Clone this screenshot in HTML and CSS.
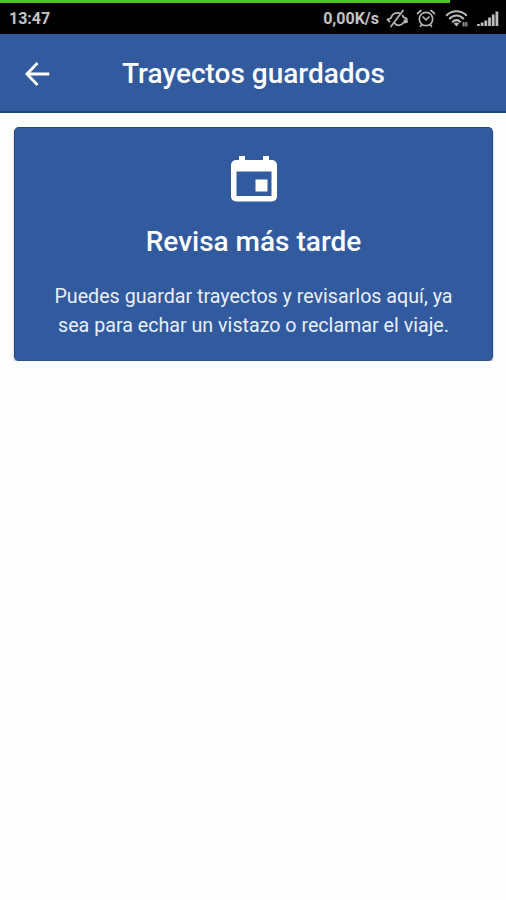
FILE: index.html
```html
<!DOCTYPE html>
<html lang="es">
<head>
<meta charset="utf-8">
<title>Trayectos guardados</title>
<link rel="stylesheet" href="styles.css">
</head>
<body>
<div class="status">
  <div class="progress"></div>
  <span class="clock">13:47</span>
  <span class="speed">0,00K/s</span>
  <svg class="mute" width="23" height="20" viewBox="0 0 23 20" fill="none" stroke="#b5b5b5" stroke-width="1.800" stroke-linecap="round" stroke-linejoin="round">
    <path d="M1.500 10.500l3.500-1.500c1-3.500 3.500-5.500 8-5M1.500 10.500l2 2M17 1.500L5 17.500M16.500 6.500c.5 1.500 1.500 2.500 4 3l.5 3.500-3.500.5c-1 1.500-2 2.500-4 2.700M9 14.500c1 1.500 2.500 2 4.500 1.700M18.500 11.500h1.500"/>
  </svg>
  <svg class="alarm" width="20" height="20" viewBox="0 0 20 20" fill="none" stroke="#b5b5b5" stroke-width="1.700" stroke-linecap="round">
    <circle cx="10" cy="10" r="6.700"/>
    <path d="M1.500 4.500L5 1.500M18.500 4.500L15 1.500M7 8l3 2.800L13 8M5.500 15.800l-1 1.500M14.500 15.800l1 1.500"/>
  </svg>
  <svg class="wifi" width="24" height="18" viewBox="0 0 24 18" fill="none" stroke="#bdbdbd" stroke-width="2.100">
    <path d="M1.200 5.700C7-.3 16-.3 21.800 5.700M4.200 9c4.200-4.600 10.400-4.600 14.600 0M7.300 12.200c2.600-2.600 5.800-2.600 8.400 0"/>
    <path d="M8.800 13.500L11.500 16.500l2.700-3c-1.600-1.500-3.800-1.500-5.400 0z" fill="#bdbdbd" stroke="none"/>
    <path d="M18.600 12v4.500M21.400 12v4.500" stroke="#888"/>
  </svg>
  <svg class="signal" width="22" height="16" viewBox="0 0 22 16" fill="#bdbdbd">
    <path d="M0 13h2.800v2H0zM3.700 11.500h2.800V15H3.700zM7.400 9.500h2.800V15H7.400zM11.100 6.500h2.800V15h-2.800zM14.800 3.500h2.800V15h-2.800zM18.500.5h2.800V15h-2.800z"/>
  </svg>
</div>
<header class="appbar">
  <svg class="back" width="25" height="24" viewBox="0 0 25 24" fill="none" stroke="#fff" stroke-width="2.800">
    <path d="M24.300 12H2.500M12.500 1L1.900 12l10.600 11"/>
  </svg>
  <h1>Trayectos guardados</h1>
</header>
<main class="card">
  <svg class="event" width="46" height="46" viewBox="0 0 46 46">
    <path fill="#fff" fill-rule="evenodd" d="M8 0h6v4h18V0h6v4h3a5 5 0 0 1 5 5v31.500a5 5 0 0 1-5 5H5a5 5 0 0 1-5-5V9a5 5 0 0 1 5-5h3zM5.500 15.500V40h35V15.500zM24.500 23.500H36.500V35.500H24.500z"/>
  </svg>
  <h2>Revisa más tarde</h2>
  <p>Puedes guardar trayectos y revisarlos aquí, ya<br>sea para echar un vistazo o reclamar el viaje.</p>
</main>
</body>
</html>
```
FILE: styles.css
```css
* {
  box-sizing: border-box;
}

body {
  margin: 0;
  background: #fefefe;
  color: #fff;
  font-family: Roboto, "Liberation Sans", sans-serif;
}

svg {
  display: block;
  flex: none;
}

.status {
  position: relative;
  display: flex;
  align-items: center;
  height: 34px;
  padding: 3px 7px 0 9px;
  background: #000;
  color: #c4c4c4;
  font-size: 16px;
  font-weight: 700;
}

.progress {
  position: absolute;
  top: 0;
  left: 0;
  width: 450px;
  height: 3px;
  background: #50c522;
}

.speed {
  margin-left: auto;
}

.mute {
  margin-left: 7px;
}

.alarm {
  margin-left: 7px;
}

.wifi {
  margin-left: 9px;
}

.signal {
  margin-left: 8px;
}

.appbar {
  display: flex;
  align-items: center;
  height: 79px;
  padding: 2px 0 0 25px;
  background: #325a9e;
  border-bottom: 2px solid #174684;
}

h1,
h2,
p {
  margin: 0;
  white-space: nowrap;
}

h1 {
  margin-left: 72px;
  font-size: 28px;
  font-weight: 500;
}

.card {
  display: flex;
  flex-direction: column;
  align-items: center;
  height: 234px;
  margin: 14px 13px 0 14px;
  padding-top: 28px;
  background: #325a9e;
  border: 1px solid #1d4b8d;
  border-bottom-color: #2a5297;
  border-radius: 5px;
  box-shadow: 0 2px 2px rgba(0, 0, 0, 0.35);
}

h2 {
  margin-top: 22px;
  font-size: 28px;
  font-weight: 500;
  line-height: 36px;
}

p {
  margin-top: 22px;
  color: #e9effa;
  font-size: 19.670px;
  line-height: 29px;
  text-align: center;
}
```
